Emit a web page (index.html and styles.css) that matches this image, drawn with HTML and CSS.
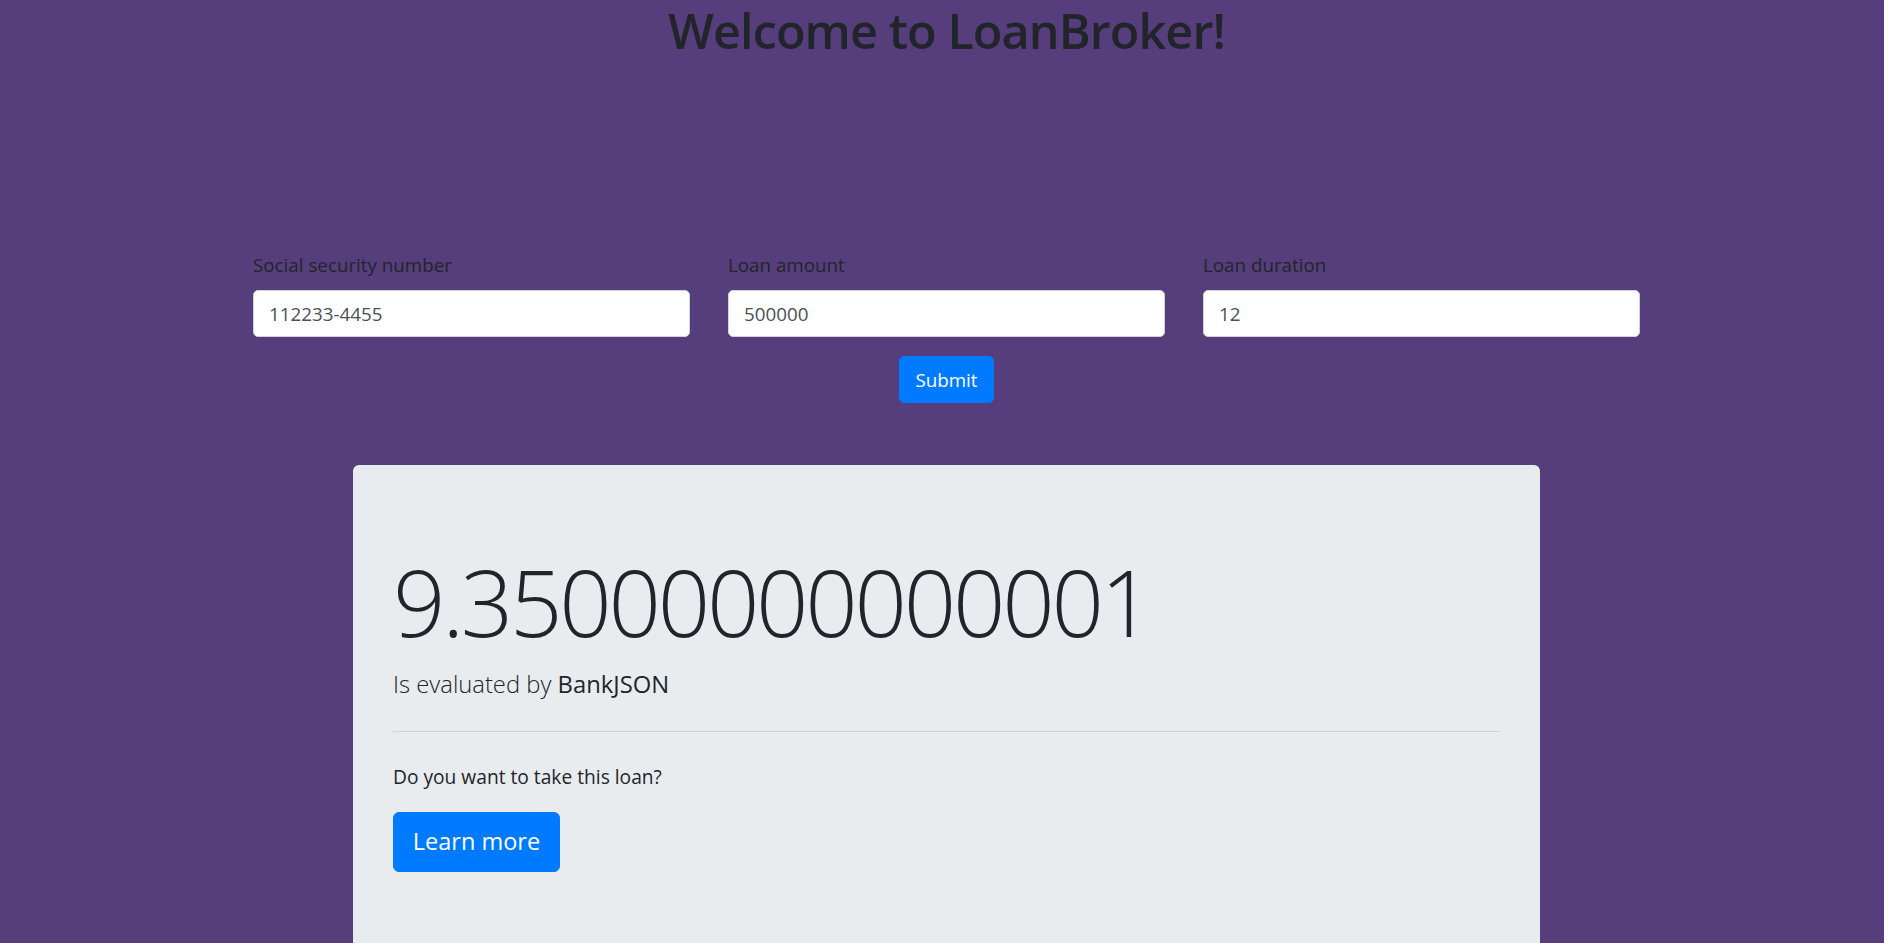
FILE: index.html
```html
<!DOCTYPE html>
<html lang="en">
<head>
<meta charset="utf-8">
<title>LoanBroker</title>
<link rel="stylesheet" href="styles.css">
</head>
<body>
<main class="page">
  <h1 class="title">Welcome to LoanBroker!</h1>
  <form class="loan-form">
    <div class="fields">
      <div class="field">
        <label class="field-label" for="ssn">Social security number</label>
        <input class="field-input" id="ssn" type="text" value="112233-4455">
      </div>
      <div class="field">
        <label class="field-label" for="amount">Loan amount</label>
        <input class="field-input" id="amount" type="text" value="500000">
      </div>
      <div class="field">
        <label class="field-label" for="duration">Loan duration</label>
        <input class="field-input" id="duration" type="text" value="12">
      </div>
    </div>
    <div class="actions">
      <button class="btn btn-submit" type="button">Submit</button>
    </div>
  </form>
  <section class="result">
    <h2 class="rate">9.35000000000001</h2>
    <p class="lead">Is evaluated by <span class="bank">BankJSON</span></p>
    <hr class="divider">
    <p class="question">Do you want to take this loan?</p>
    <a class="btn btn-large" href="#">Learn more</a>
  </section>
</main>
</body>
</html>
```

FILE: styles.css
```css
html, body {
  margin: 0;
  padding: 0;
}
body {
  background: #563d7c;
  color: #212529;
  font-family: "Open Sans", "Noto Sans", sans-serif;
  font-size: 20px;
  line-height: 1.5;
  padding-left: 9px;
  overflow: hidden;
}
.page {
  display: flex;
  flex-direction: column;
  align-items: center;
}
.title {
  margin: 0;
  font-size: 48.5px;
  font-weight: 600;
  line-height: 60px;
  letter-spacing: -0.9px;
  color: #212529;
}
.loan-form {
  width: 1387px;
  margin-top: 190px;
}
.fields {
  display: grid;
  grid-template-columns: repeat(3, 1fr);
  column-gap: 38px;
}
.field {
  display: flex;
  flex-direction: column;
  margin-bottom: 19px;
}
.field-label {
  font-size: 18.8px;
  line-height: 30px;
  margin-bottom: 10px;
  color: #212529;
}
.field-input {
  box-sizing: border-box;
  height: 47px;
  padding: 0 15px;
  border: 1px solid #ced4da;
  border-radius: 5px;
  background: #fff;
  color: #495057;
  font-family: inherit;
  font-size: 18.8px;
}
.actions {
  display: flex;
  justify-content: center;
}
.btn {
  box-sizing: border-box;
  display: inline-flex;
  align-items: center;
  justify-content: center;
  background: #007bff;
  color: #fff;
  border: 1px solid #007bff;
  font-family: inherit;
  text-decoration: none;
}
.btn-submit {
  width: 95px;
  height: 47px;
  border-radius: 5px;
  font-size: 18.8px;
  padding: 0;
}
.result {
  box-sizing: border-box;
  width: 1187px;
  margin-top: 62px;
  padding: 80px 40px;
  background: #e9ecef;
  border-radius: 6px;
  min-height: 600px;
}
.rate {
  margin: 3px 0 10px;
  font-size: 92px;
  font-weight: 300;
  line-height: 108px;
  letter-spacing: -3.3px;
  color: #212529;
}
.lead {
  margin: 0 0 20px;
  font-size: 23.8px;
  font-weight: 300;
  line-height: 37.5px;
  color: #212529;
}
.bank {
  font-weight: 400;
}
.divider {
  margin: 27px 0 30px;
  border: 0;
  border-top: 1px solid rgba(0, 0, 0, 0.1);
}
.question {
  margin: 0 0 20px;
  font-size: 19.2px;
  line-height: 30px;
}
.btn-large {
  width: 167px;
  height: 60px;
  border-radius: 6px;
  font-size: 23.5px;
}
```
